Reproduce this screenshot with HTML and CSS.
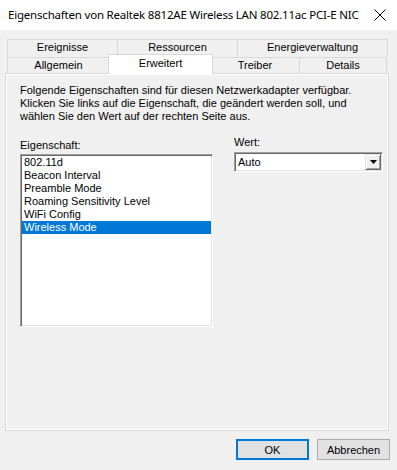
FILE: index.html
```html
<!DOCTYPE html>
<html lang="de">
<head>
    <meta charset="UTF-8">
    <meta name="viewport" content="width=device-width, initial-scale=1.0">
    <title>Eigenschaften von Realtek 8812AE Wireless LAN 802.11ac PCI-E NIC</title>
    <link rel="stylesheet" href="styles.css">
</head>
<body>
    <div class="titlebar">
        <span class="title">Eigenschaften von Realtek 8812AE Wireless LAN 802.11ac PCI-E NIC</span>
        <svg class="close" width="12" height="12" viewBox="0 0 12 12">
            <path d="M0.5 0.5 L11.5 11.5 M11.5 0.5 L0.5 11.5" stroke="#000" stroke-width="1" fill="none"/>
        </svg>
    </div>

    <div class="sheet">
        <div class="tabs">
            <div class="tab-row row-back">
                <div class="tab tab-first" style="width: 111px">Ereignisse</div>
                <div class="tab" style="width: 120px">Ressourcen</div>
                <div class="tab" style="width: 150px">Energieverwaltung</div>
            </div>
            <div class="tab-row row-front">
                <div class="tab tab-first" style="width: 103px">Allgemein</div>
                <div class="tab tab-active" style="width: 105px">Erweitert</div>
                <div class="tab" style="width: 89px">Treiber</div>
                <div class="tab" style="width: 87px">Details</div>
            </div>
        </div>

        <div class="panel">
            <p class="intro">
                Folgende Eigenschaften sind für diesen Netzwerkadapter verfügbar.<br>
                Klicken Sie links auf die Eigenschaft, die geändert werden soll, und<br>
                wählen Sie den Wert auf der rechten Seite aus.
            </p>

            <div class="fields">
                <div class="field field-prop">
                    <label class="field-label">Eigenschaft:</label>
                    <ul class="listbox">
                        <li>802.11d</li>
                        <li>Beacon Interval</li>
                        <li>Preamble Mode</li>
                        <li>Roaming Sensitivity Level</li>
                        <li>WiFi Config</li>
                        <li class="selected">Wireless Mode</li>
                    </ul>
                </div>
                <div class="field field-value">
                    <label class="field-label">Wert:</label>
                    <div class="combo">
                        <span class="combo-text">Auto</span>
                        <span class="combo-btn">
                            <svg width="7" height="4" viewBox="0 0 7 4"><path d="M0 0 H7 L3.5 4 Z" fill="#000"/></svg>
                        </span>
                    </div>
                </div>
            </div>
        </div>
    </div>

    <div class="buttons">
        <button class="btn btn-default">OK</button>
        <button class="btn">Abbrechen</button>
    </div>
</body>
</html>
```

FILE: styles.css
```css
body {
    margin: 0;
    width: 397px;
    height: 470px;
    background: #f0f0f0;
    font-family: "Liberation Sans", Arial, sans-serif;
    font-size: 11px;
    color: #000;
    overflow: hidden;
}

.titlebar {
    height: 30px;
    background: #fff;
    display: flex;
    align-items: center;
    justify-content: space-between;
    padding: 0 11px 0 8px;
}

.title {
    font-family: "Segoe UI", "Noto Sans", sans-serif;
    font-size: 11.5px;
    letter-spacing: -0.2px;
    line-height: 16px;
    white-space: nowrap;
}

.close {
    display: block;
    flex-shrink: 0;
}

.sheet {
    padding: 9px 8px 0 5px;
}

.tabs {
    padding-left: 2px;
}

.tab-row {
    display: flex;
}

.tab {
    box-sizing: border-box;
    background: #f0f0f0;
    border-top: 1px solid #d9d9d9;
    border-right: 1px solid #d9d9d9;
    text-align: center;
}

.tab-first {
    border-left: 1px solid #d9d9d9;
}

.row-back .tab {
    height: 18px;
    line-height: 15px;
    padding-bottom: 2px;
}

.row-front {
    height: 16px;
}

.row-front .tab {
    line-height: 13px;
    padding-top: 1px;
}

.tab-active {
    position: relative;
    z-index: 1;
    background: #fff;
    border-left: 1px solid #d9d9d9;
    margin: -3px -2px -1px -2px;
}

.row-front .tab-active {
    padding-top: 2px;
}

.panel {
    height: 358px;
    border: 1px solid #d9d9d9;
    box-shadow: inset 1px 1px #fff, inset -1px -1px #fff;
    padding: 10px 5px 0 14px;
    box-sizing: border-box;
}

.intro {
    margin: 0;
    line-height: 13px;
}

.fields {
    display: flex;
    margin-top: 13px;
}

.field-label {
    display: block;
    line-height: 13px;
}

.field-prop {
    width: 193px;
    padding-top: 3px;
}

.field-prop .field-label {
    margin-bottom: 2px;
}

.field-value {
    margin-left: 21px;
    width: 149px;
}

.field-value .field-label {
    margin-bottom: 3px;
}

.listbox {
    list-style: none;
    margin: 0;
    height: 173px;
    box-sizing: border-box;
    background: #fff;
    border: 1px solid;
    border-color: #a0a0a0 #fff #fff #a0a0a0;
    box-shadow: inset 1px 1px #696969, inset -1px -1px #e3e3e3;
    padding: 1px;
}

.listbox li {
    line-height: 13px;
    padding-left: 2px;
}

.listbox li.selected {
    background: #0078d7;
    color: #fff;
}

.combo {
    height: 20px;
    box-sizing: border-box;
    background: #fff;
    border: 1px solid;
    border-color: #a0a0a0 #fff #fff #a0a0a0;
    box-shadow: inset 1px 1px #696969, inset -1px -1px #e3e3e3;
    padding: 1px;
    display: flex;
    align-items: center;
}

.combo-text {
    flex: 1;
    padding-left: 2px;
    line-height: 13px;
}

.combo-btn {
    width: 16px;
    height: 16px;
    box-sizing: border-box;
    background: #f0f0f0;
    border: 1px solid;
    border-color: #e3e3e3 #696969 #696969 #e3e3e3;
    box-shadow: inset 1px 1px #fff, inset -1px -1px #a0a0a0;
    display: flex;
    align-items: center;
    justify-content: center;
}

.combo-btn svg {
    display: block;
}

.buttons {
    display: flex;
    justify-content: flex-end;
    gap: 8px;
    padding: 8px 7px 0 0;
}

.btn {
    width: 73px;
    height: 21px;
    box-sizing: border-box;
    background: #e1e1e1;
    border: 1px solid #adadad;
    font-family: "Liberation Sans", Arial, sans-serif;
    font-size: 11px;
    color: #000;
    padding: 0;
}

.btn-default {
    border: 2px solid #0078d7;
}
```
